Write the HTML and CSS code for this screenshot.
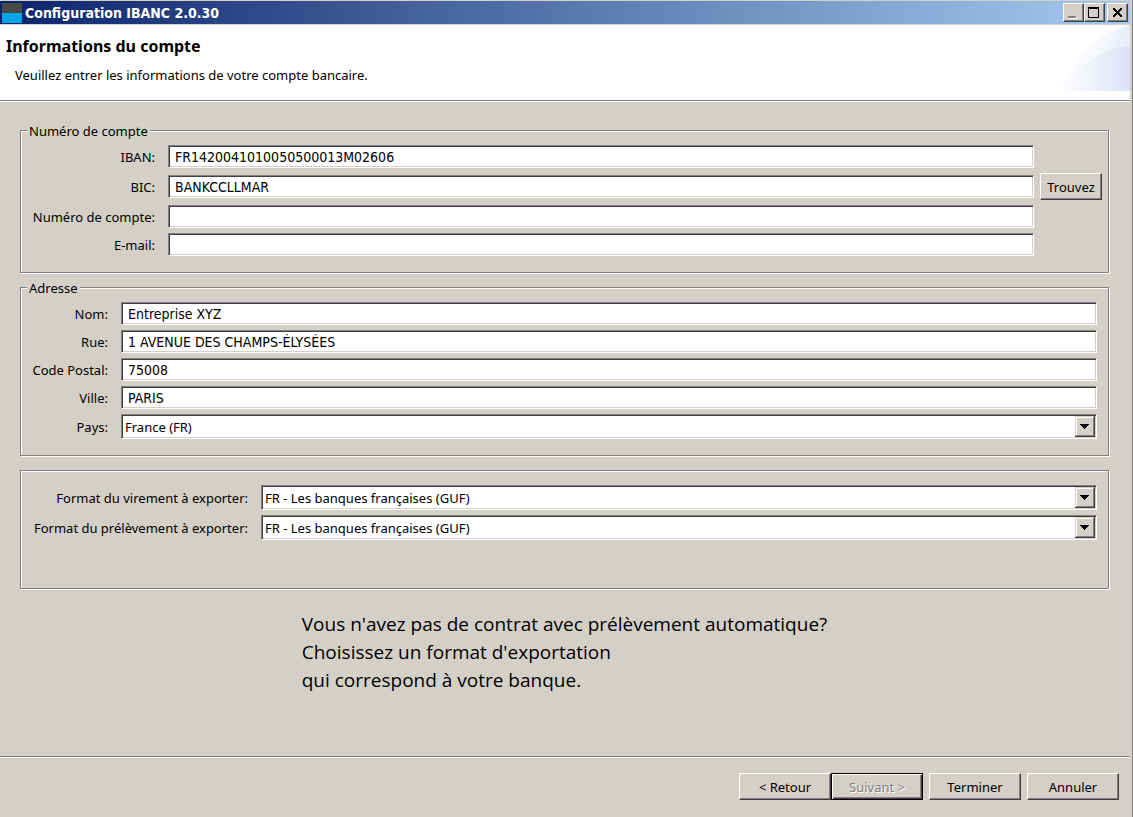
FILE: index.html
```
<!DOCTYPE html>
<html lang="fr">
<head>
  <meta charset="UTF-8" />
  <title>Configuration IBANC 2.0.30</title>
  <link rel="stylesheet" href="styles.css">
</head>
<body>

  <div class="window">
    <div class="titlebar">
      <span class="app-icon"></span>
      <span class="title">Configuration IBANC 2.0.30</span>
      <div class="window-buttons">
        <button type="button" aria-label="Réduire">
          <svg width="21" height="19" shape-rendering="crispEdges">
            <path d="M6 14h8v2H6z" fill="#fff"/>
            <path d="M5 13h8v2H5z" fill="#808080"/>
          </svg>
        </button>
        <button type="button" aria-label="Agrandir">
          <svg width="21" height="19" shape-rendering="crispEdges">
            <path d="M4 4h11v11H4zM5 6v8h9V6z" fill="#000" fill-rule="evenodd"/>
          </svg>
        </button>
        <button type="button" class="close" aria-label="Fermer">
          <svg width="21" height="19" shape-rendering="crispEdges">
            <path d="M6 5h2v1h1v1h1v1h1v-1h1v-1h1v-1h2v2h-1v1h-1v1h-1v1h1v1h1v1h1v2h-2v-1h-1v-1h-1v-1h-1v1h-1v1h-1v1h-2v-2h1v-1h1v-1h1v-1h-1v-1h-1v-1h-1z" fill="#000"/>
          </svg>
        </button>
      </div>
    </div>

    <header>
      <div>
        <h1>Informations du compte</h1>
        <p>Veuillez entrer les informations de votre compte bancaire.</p>
      </div>
      <svg class="wave" width="74" height="66" viewBox="0 0 74 66">
        <defs>
          <linearGradient id="fade" x1="0" x2="1">
            <stop offset="0" stop-color="#fff"/>
            <stop offset="1" stop-color="#e6ebf9"/>
          </linearGradient>
          <linearGradient id="fadeDark" x1="0" x2="1">
            <stop offset="0" stop-color="#fff"/>
            <stop offset="0.35" stop-color="#f4f6fd"/>
            <stop offset="1" stop-color="#dbe2f6"/>
          </linearGradient>
        </defs>
        <path d="M0 66C14 38 42 5 74 0V66z" fill="url(#fade)" opacity="0.6"/>
        <path d="M26 66C34 34 54 8 74 0V66z" fill="url(#fade)" opacity="0.8"/>
        <path d="M0 66C20 42 48 22 74 21V66z" fill="url(#fadeDark)"/>
      </svg>
    </header>

    <main>
      <fieldset class="account">
        <legend>Numéro de compte</legend>
        <label for="iban">IBAN:</label>
        <input type="text" id="iban" value="FR1420041010050500013M02606">
        <label for="bic">BIC:</label>
        <input type="text" id="bic" value="BANKCCLLMAR">
        <button type="button" class="find">Trouvez</button>
        <label for="account">Numéro de compte:</label>
        <input type="text" id="account">
        <label for="email">E-mail:</label>
        <input type="text" id="email">
      </fieldset>

      <fieldset class="address">
        <legend>Adresse</legend>
        <label for="name">Nom:</label>
        <input type="text" id="name" value="Entreprise XYZ">
        <label for="street">Rue:</label>
        <input type="text" id="street" value="1 AVENUE DES CHAMPS-ÉLYSÉES">
        <label for="zip">Code Postal:</label>
        <input type="text" id="zip" value="75008">
        <label for="city">Ville:</label>
        <input type="text" id="city" value="PARIS">
        <label for="country">Pays:</label>
        <select id="country">
          <option>France (FR)</option>
        </select>
      </fieldset>

      <fieldset class="formats">
        <label for="transfer">Format du virement à exporter:</label>
        <select id="transfer">
          <option>FR - Les banques françaises (GUF)</option>
        </select>
        <label for="debit">Format du prélèvement à exporter:</label>
        <select id="debit">
          <option>FR - Les banques françaises (GUF)</option>
        </select>
      </fieldset>

      <p class="hint">
        Vous n'avez pas de contrat avec prélèvement automatique?<br>
        Choisissez un format d'exportation<br>
        qui correspond à votre banque.
      </p>
    </main>

    <footer>
      <div class="nav-buttons">
        <button type="button">&lt; Retour</button>
        <button type="button" class="next" disabled>Suivant &gt;</button>
      </div>
      <button type="button">Terminer</button>
      <button type="button">Annuler</button>
    </footer>
  </div>

</body>
</html>
```
FILE: styles.css
```
* {
  box-sizing: border-box;
}
html, body {
  height: 100%;
  margin: 0;
}
body, select, button {
  font: 13px/16px "Noto Sans", "Open Sans", sans-serif;
  color: #000;
}
.window {
  display: flex;
  flex-direction: column;
  min-height: 100%;
  padding: 1px 2px 0 0;
  border-right: 1px solid #808080;
  background: #d4d0c8;
}

/* title bar */
.titlebar {
  display: flex;
  align-items: center;
  height: 23px;
  padding: 0 2px;
  background: linear-gradient(to right, #0a246a, #a6caf0);
}
.app-icon {
  width: 20px;
  height: 20px;
  background: linear-gradient(#4a4a4a 50%, #00a5e3 50%);
}
.title {
  margin-left: 3px;
  font: bold 14px/16px "DejaVu Sans Condensed", "DejaVu Sans", sans-serif;
  color: #fff;
}
.window-buttons {
  display: flex;
  margin-left: auto;
}
.window-buttons .close {
  margin-left: 2px;
}
.window-buttons svg {
  display: block;
  margin: -1px;
}

/* raised buttons */
button {
  padding: 0;
  border: 1px solid;
  border-color: #fff #404040 #404040 #fff;
  box-shadow: inset -1px -1px #808080;
  background: #d4d0c8;
}
.window-buttons button {
  width: 21px;
  height: 19px;
}

header {
  display: flex;
  justify-content: space-between;
  height: 76px;
  margin-top: 1px;
  border-bottom: 1px solid #808080;
  box-shadow: 0 1px #fff;
  background: #fff;
}
h1 {
  margin: 9px 0 0 6px;
  font: bold 16px/24px "Noto Sans", sans-serif;
}
header p {
  margin: 9px 0 0 15px;
}

main {
  padding: 20px 21px 0 20px;
}
fieldset {
  display: grid;
  align-items: center;
  gap: 5px 13px;
  min-width: 0;
  margin: 0;
  padding: 6px 11px 16px 10px;
  border: 1px solid #808080;
  box-shadow: 1px 1px #fff, inset 1px 1px #fff;
}
legend {
  margin-left: -4px;
  padding: 2px 2px 0;
  background: #d4d0c8;
}
label {
  text-align: right;
}
.account {
  grid-template-columns: minmax(124px, max-content) 1fr 55px;
  padding-right: 6px;
}
.account label {
  grid-column: 1;
}
.find {
  width: 62px;
  height: 27px;
  margin-left: -7px;
}
.address {
  grid-template-columns: minmax(77px, max-content) 1fr;
  margin-top: 5px;
}
.formats {
  grid-template-columns: minmax(217px, max-content) 1fr;
  margin-top: 14px;
  padding-top: 14px;
  padding-bottom: 48px;
}

input, select {
  width: 100%;
  height: 23px;
  border: 1px solid;
  border-color: #808080 #fff #fff #808080;
  border-radius: 0;
  box-shadow: inset 1px 1px #404040, inset -1px -1px #d4d0c8;
  background-color: #fff;
}
input {
  padding: 0 6px;
  font: 14px/16px "DejaVu Sans Condensed", "DejaVu Sans", sans-serif;
  color: #000;
}
select {
  height: 25px;
  padding: 0 22px 0 3px;
  appearance: none;
  background-image: url("data:image/svg+xml,%3Csvg xmlns='http://www.w3.org/2000/svg' width='20' height='21' shape-rendering='crispEdges'%3E%3Cpath fill='%23404040' d='M0 0h20v21H0z'/%3E%3Cpath fill='%23d4d0c8' d='M0 0h19v20H0z'/%3E%3Cpath fill='%23808080' d='M1 1h18v19H1z'/%3E%3Cpath fill='%23fff' d='M1 1h17v18H1z'/%3E%3Cpath fill='%23d4d0c8' d='M2 2h16v17H2z'/%3E%3Cpath d='M5 8h9v1H5zM6 9h7v1H6zM7 10h5v1H7zM8 11h3v1H8zM9 12h1v1H9z'/%3E%3C/svg%3E");
  background-position: right 1px top 1px;
  background-repeat: no-repeat;
}

.hint {
  width: fit-content;
  margin: 21px auto;
  font: 19px/28px "Open Sans", "Noto Sans", sans-serif;
}

footer {
  display: flex;
  justify-content: flex-end;
  gap: 6px;
  margin-top: auto;
  padding: 16px 11px 17px;
  border-top: 1px solid #808080;
  box-shadow: inset 0 1px #fff;
}
footer button {
  width: 92px;
  height: 27px;
}
.nav-buttons {
  display: flex;
}
.next {
  border-color: #000;
  box-shadow: inset 1px 1px #fff, inset -1px -1px #404040, inset -2px -2px #808080;
  color: #808080;
  text-shadow: 1px 1px #fff;
}
```
